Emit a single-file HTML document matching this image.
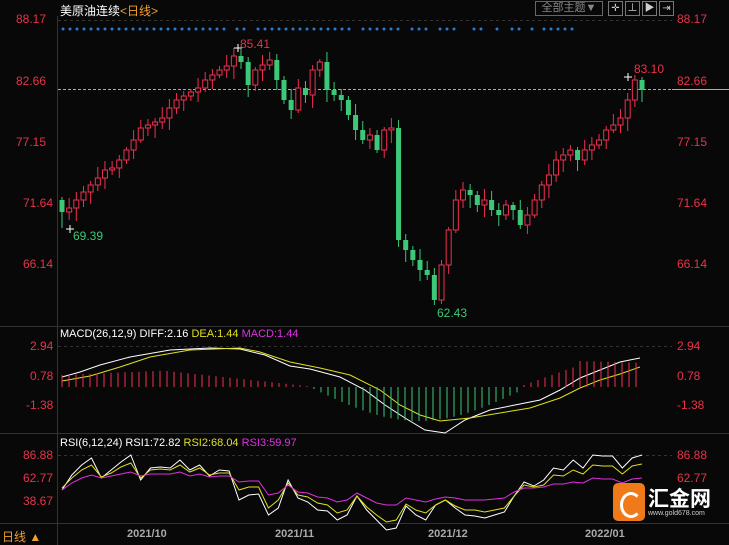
<!DOCTYPE html>
<html><head><meta charset="utf-8">
<style>
html,body{margin:0;padding:0;background:#080808;}
body{width:729px;height:545px;overflow:hidden;position:relative;font-family:"Liberation Sans","Noto Sans CJK SC",sans-serif;}
.t{position:absolute;font-size:12px;white-space:nowrap;}
.r{color:#e8334a;}
svg{position:absolute;left:0;top:0;}
</style></head><body>
<svg id="s" width="729" height="545"></svg>
<div class="t" style="left:60px;top:2px;color:#fff;font-size:12px">美原油连续<span style="color:#f0a030">&lt;日线&gt;</span></div>
<div class="t" style="left:535px;top:1px;width:66px;height:13px;border:1px solid #666;color:#888;font-size:11px;text-align:center;line-height:13px">全部主题▼</div>
<div class="t" style="left:608px;top:1px;width:13px;height:13px;border:1px solid #777;color:#ccc;font-size:10px;text-align:center;line-height:13px">✛</div>
<div class="t" style="left:625px;top:1px;width:13px;height:13px;border:1px solid #777;color:#ccc;font-size:10px;text-align:center;line-height:13px">⊥</div>
<div class="t" style="left:642px;top:1px;width:13px;height:13px;border:1px solid #777;color:#ccc;font-size:10px;text-align:center;line-height:13px">▶</div>
<div class="t" style="left:659px;top:1px;width:13px;height:13px;border:1px solid #777;color:#ccc;font-size:10px;text-align:center;line-height:13px">⇥</div>
<div class="t r" style="left:16px;top:12px">88.17</div>
<div class="t r" style="left:16px;top:74px">82.66</div>
<div class="t r" style="left:16px;top:135px">77.15</div>
<div class="t r" style="left:23px;top:196px">71.64</div>
<div class="t r" style="left:23px;top:257px">66.14</div>
<div class="t r" style="left:677px;top:12px">88.17</div>
<div class="t r" style="left:677px;top:74px">82.66</div>
<div class="t r" style="left:677px;top:135px">77.15</div>
<div class="t r" style="left:677px;top:196px">71.64</div>
<div class="t r" style="left:677px;top:257px">66.14</div>
<div class="t r" style="left:240px;top:37px">85.41</div>
<div class="t r" style="left:634px;top:62px">83.10</div>
<div class="t" style="left:73px;top:229px;color:#3cc878">69.39</div>
<div class="t" style="left:437px;top:306px;color:#3cc878">62.43</div>
<div class="t" style="left:60px;top:328px;font-size:11px;color:#fff">MACD(26,12,9) DIFF:2.16 <span style="color:#e0e020">DEA:1.44</span> <span style="color:#e030e0">MACD:1.44</span></div>
<div class="t r" style="left:30px;top:339px">2.94</div>
<div class="t r" style="left:30px;top:369px">0.78</div>
<div class="t r" style="left:26px;top:398px">-1.38</div>
<div class="t r" style="left:677px;top:339px">2.94</div>
<div class="t r" style="left:677px;top:369px">0.78</div>
<div class="t r" style="left:677px;top:398px">-1.38</div>
<div class="t" style="left:60px;top:437px;font-size:11px;color:#fff">RSI(6,12,24) RSI1:72.82 <span style="color:#e0e020">RSI2:68.04</span> <span style="color:#e030e0">RSI3:59.97</span></div>
<div class="t r" style="left:23px;top:448px">86.88</div>
<div class="t r" style="left:23px;top:471px">62.77</div>
<div class="t r" style="left:23px;top:494px">38.67</div>
<div class="t r" style="left:677px;top:448px">86.88</div>
<div class="t r" style="left:677px;top:471px">62.77</div>
<div class="t" style="left:2px;top:528px;color:#f0a030;font-size:12px">日线 ▲</div>
<div class="t" style="left:127px;top:528px;color:#aaa;font-size:11px;font-weight:bold">2021/10</div>
<div class="t" style="left:275px;top:528px;color:#aaa;font-size:11px;font-weight:bold">2021/11</div>
<div class="t" style="left:428px;top:528px;color:#aaa;font-size:11px;font-weight:bold">2021/12</div>
<div class="t" style="left:585px;top:528px;color:#aaa;font-size:11px;font-weight:bold">2022/01</div>
<div style="position:absolute;left:613px;top:483px;width:32px;height:38px;border-radius:5px;background:#f07a1a;"></div>
<div style="position:absolute;left:620px;top:492px;width:16px;height:20px;border-radius:50%;border:3px solid #fff;border-right-color:transparent;"></div>
<div class="t" style="left:648px;top:483px;color:#fff;font-size:21px;font-weight:bold">汇金网</div>
<div class="t" style="left:648px;top:510px;color:#ccc;font-size:7px">www.gold678.com</div>
<script>
var s=document.getElementById('s'),h='';
function L(x1,y1,x2,y2,c,d){h+='<line x1="'+x1+'" y1="'+y1+'" x2="'+x2+'" y2="'+y2+'" stroke="'+c+'" stroke-width="1"'+(d?' stroke-dasharray="'+d+'"':'')+'/>';}
L(57.5,16,57.5,545,'#333');L(0,326.5,729,326.5,'#333');L(0,433.5,729,433.5,'#333');L(0,523.5,729,523.5,'#333');
L(58,20.5,672,20.5,'#333','3,3');L(58,346.5,672,346.5,'#333','3,3');L(58,455.5,672,455.5,'#333','3,3');
L(58,89.5,672,89.5,'#f0a030','3,2');L(672,89.5,729,89.5,'#f0a030');
var dx=[];function run(a,b){for(var x=a;x<=b+0.1;x+=7)dx.push(x);}
run(63,226);dx.push(237,244);run(258,351);run(363,400);run(412,428);run(440,456);dx.push(474,481,497,512,519,532);run(544,574);
dx.forEach(function(x){h+='<circle cx="'+x+'" cy="29" r="1.5" fill="#2a7ad0"/>';});
var c=[212,208,200,192,185,178,170,168,160,150,140,128,125,122,118,108,100,96,92,88,80,75,70,66,56,62,85,70,65,60,80,100,110,88,95,70,62,90,95,100,115,130,140,135,150,130,128,240,250,260,270,275,300,265,230,200,190,195,205,200,210,215,205,210,225,215,200,185,175,160,155,150,160,150,145,140,130,125,118,100,80,90];
var n=c.length,sp=580/(n-1);
for(var i=0;i<n;i++){var x=62+i*sp,a=(i==0?200:c[i-1]),b=c[i];var up=b<a;var col=up?'#f03050':'#3cc878';var t=Math.min(a,b),bt=Math.max(a,b);if(bt-t<1)bt=t+1;var hi=t-3-(i*7%9),lo=bt+3+(i*5%11);
if(i==52)lo=305;if(i==24)hi=48;if(i==0)lo=228;
L(x,hi,x,lo,col);
if(up)h+='<rect x="'+(x-2.5)+'" y="'+t+'" width="5" height="'+(bt-t)+'" fill="#080808" stroke="'+col+'"/>';else h+='<rect x="'+(x-2.5)+'" y="'+t+'" width="5" height="'+(bt-t)+'" fill="'+col+'"/>';}
h+='<path d="M234 48h8M238 44v8M624 77h8M628 73v8M66 229h8M70 225v8" stroke="#fff"/>';
function P(pts,col){var d='';pts.forEach(function(p,k){d+=(k?'L':'M')+p[0]+' '+p[1];});h+='<path d="'+d+'" fill="none" stroke="'+col+'" stroke-width="1"/>';}
P([[62,377],[80,372],[100,365],[130,357],[170,350],[210,348],[240,349],[265,355],[290,366],[310,369],[340,377],[365,390],[385,405],[405,418],[425,430],[445,433],[465,420],[490,410],[520,404],[540,400],[560,390],[580,378],[600,370],[620,362],[640,358]],'#fff');
P([[62,381],[90,376],[120,367],[150,357],[190,350],[240,348],[260,352],[290,362],[320,368],[350,375],[380,390],[400,405],[420,415],[440,421],[470,418],[500,413],[530,408],[560,398],[580,388],[600,380],[620,374],[640,367]],'#e0e020');
for(i=0;i<84;i++){var x2=62+i*7;var v;if(i<36)v=(i<15?12+i*0.3:16-(i-15)*0.75);else if(i<66)v=-Math.sin((i-36)/30*Math.PI)*32-2;else v=Math.min(28,(i-66)*2.5)+2;
if(i>=74)v=26-((i-74)*0.2);if(x2>642)break;L(x2,387,x2,387-v,v>=0?'#f03050':'#3cc878');}
function R(arr,col){var pts=arr.map(function(v,k){return [62+k*580/(arr.length-1),v];});P(pts,col);}
R([490,475,465,458,478,470,462,455,480,468,467,468,460,470,465,476,470,471,500,495,494,515,508,480,498,502,510,511,520,515,496,510,520,530,528,506,515,520,505,500,508,515,516,518,515,512,496,482,486,480,468,470,460,468,455,456,456,468,458,455],'#fff');
R([488,478,470,465,477,473,467,463,478,470,469,470,465,472,468,475,473,473,490,487,487,508,500,483,495,497,503,505,513,510,496,507,515,522,520,504,510,513,505,500,506,510,510,512,510,508,496,485,487,485,475,476,470,474,465,466,466,474,466,464],'#e0e020');
R([490,483,478,475,478,476,474,472,476,474,474,474,472,476,474,477,476,476,482,481,481,495,493,485,492,493,497,498,502,500,493,498,503,505,505,498,500,502,499,497,498,500,500,500,499,498,492,488,488,487,484,484,482,483,478,479,479,483,479,478],'#e030e0');
s.innerHTML=h;
</script>
</body></html>
